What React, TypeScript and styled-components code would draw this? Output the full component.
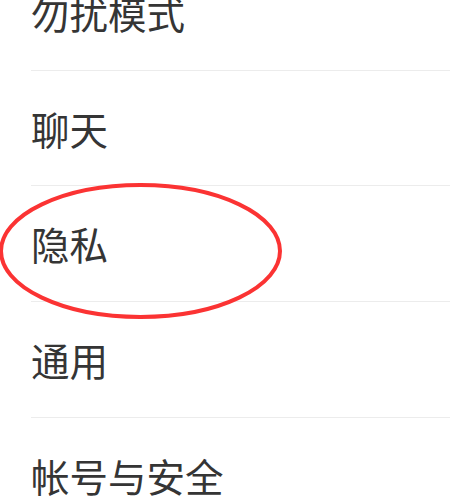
import React from "react";
import styled, { createGlobalStyle } from "styled-components";

const Global = createGlobalStyle`
  html, body {
    margin: 0;
    padding: 0;
    background: #ffffff;
  }
  body {
    width: 450px;
    height: 500px;
    overflow: hidden;
    font-family: "Noto Sans CJK SC", "Noto Sans", sans-serif;
  }
`;

const Page = styled.div`
  position: relative;
  width: 450px;
  height: 500px;
  overflow: hidden;
  background: #ffffff;
`;

const List = styled.ul`
  list-style: none;
  margin: -45px 0 0 0;
  padding: 0;
`;

const Row = styled.li`
  display: flex;
  align-items: center;
  height: 114.7px;
  margin-left: 31px;
  border-bottom: 1px solid #ececec;
  font-size: 38.5px;
  line-height: 1;
  color: #353535;
  letter-spacing: 0;
`;

const Mark = styled.svg`
  position: absolute;
  left: 0;
  top: 0;
  pointer-events: none;
`;

const items = ["勿扰模式", "聊天", "隐私", "通用", "帐号与安全"];

export default function App() {
  return (
    <>
      <Global />
      <Page>
        <List>
          {items.map((t) => (
            <Row key={t}>{t}</Row>
          ))}
        </List>
        <Mark width="450" height="500" viewBox="0 0 450 500">
          <ellipse
            cx="140.5"
            cy="251"
            rx="139.5"
            ry="66"
            fill="none"
            stroke="#fb3333"
            strokeWidth="4"
          />
        </Mark>
      </Page>
    </>
  );
}
